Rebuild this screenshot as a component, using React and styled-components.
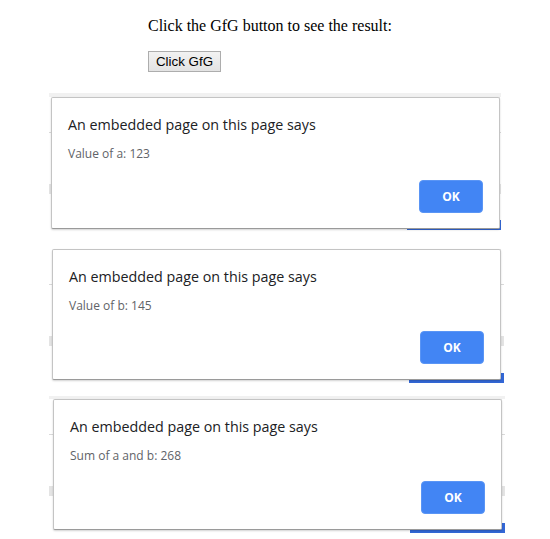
import React from 'react';
import styled, { createGlobalStyle } from 'styled-components';

const Global = createGlobalStyle`
	body {
		margin: 0;
		background: #fff;
	}
`;

const Page = styled.div`
	padding-top: 16px;
	width: 550px;
	height: 539px;
	overflow: hidden;
`;

const Intro = styled.div`
	padding-left: 148px;
`;

const Lead = styled.p`
	margin: 0;
	font-family: "Liberation Serif", serif;
	font-size: 16px;
	line-height: 19px;
	color: #000;
`;

const GfgButton = styled.button`
	margin-top: 16px;
	height: 21px;
	width: 73px;
	padding: 0;
	font-family: "Liberation Sans", Arial, sans-serif;
	font-size: 13.33px;
	color: #000;
	background: linear-gradient(#f2f2f2, #e3e3e3);
	border: 1px solid #adadad;
	border-radius: 0;
`;

const Shots = styled.div`
	display: flex;
	flex-direction: column;
	margin-top: 21px;
`;

// a cut of the browser window behind each dialog
const Strip = styled.div`
	margin-left: 49px;
	margin-top: ${p => p.$gap}px;
	width: ${p => p.$width}px;
	padding-top: ${p => p.$top}px;
	padding-bottom: ${p => p.$bottom}px;
	background:
		linear-gradient(#3367d6, #3367d6) right bottom / ${p => p.$blue}px 10px no-repeat,
		linear-gradient(
			to bottom,
			${p => p.$band ? '#f1f1f1' : '#fff'} 0 ${p => p.$top}px,
			#fff ${p => p.$top}px ${p => p.$top + 35}px,
			#dadada ${p => p.$top + 35}px ${p => p.$top + 36}px,
			#fff ${p => p.$top + 36}px ${p => p.$top + 87}px,
			#e4e4e4 ${p => p.$top + 87}px ${p => p.$top + 97}px,
			#fff ${p => p.$top + 97}px
		);
`;

const Dialog = styled.div`
	box-sizing: border-box;
	margin-left: ${p => p.$inset}px;
	width: 449px;
	height: ${p => p.$height}px;
	padding: 17px 16px 15px 16px;
	display: flex;
	flex-direction: column;
	background: #fff;
	border: 1px solid #c4c4c4;
	border-bottom-color: #9a9a9a;
	border-radius: 2px;
	box-shadow: 0 1px 2px rgba(0, 0, 0, 0.18);
	font-family: "Open Sans", "Noto Sans", sans-serif;
`;

const Title = styled.div`
	font-size: 14.3px;
	line-height: 20px;
	color: #202124;
`;

const Message = styled.div`
	margin-top: 10px;
	font-size: 12px;
	line-height: 18px;
	color: #5f6368;
`;

const Footer = styled.div`
	margin-top: auto;
	display: flex;
	justify-content: flex-end;
`;

const OkButton = styled.button`
	width: 64px;
	height: 33px;
	padding: 0;
	border: 1px solid #5a95f5;
	border-radius: 4px;
	background: #4285f4;
	color: #fff;
	font-family: "Open Sans", "Noto Sans", sans-serif;
	font-weight: 700;
	font-size: 12px;
`;

const alerts = [
	{ text: 'Value of a: 123', gap: 0, top: 4, bottom: 1, height: 132, width: 452, inset: 2, blue: 94, band: true },
	{ text: 'Value of b: 145', gap: 15, top: 4, bottom: 3, height: 131, width: 455, inset: 3, blue: 95, band: false },
	{ text: 'Sum of a and b: 268', gap: 13, top: 3, bottom: 3, height: 131, width: 456, inset: 4, blue: 95, band: true },
];

export default function App() {
	return (
		<Page>
			<Global />
			<Intro>
				<Lead>Click the GfG button to see the result:</Lead>
				<GfgButton>Click GfG</GfgButton>
			</Intro>
			<Shots>
				{alerts.map((a) => (
					<Strip key={a.text} $gap={a.gap} $top={a.top} $bottom={a.bottom} $width={a.width} $blue={a.blue} $band={a.band}>
						<Dialog $inset={a.inset} $height={a.height}>
							<Title>An embedded page on this page says</Title>
							<Message>{a.text}</Message>
							<Footer>
								<OkButton>OK</OkButton>
							</Footer>
						</Dialog>
					</Strip>
				))}
			</Shots>
		</Page>
	);
}
